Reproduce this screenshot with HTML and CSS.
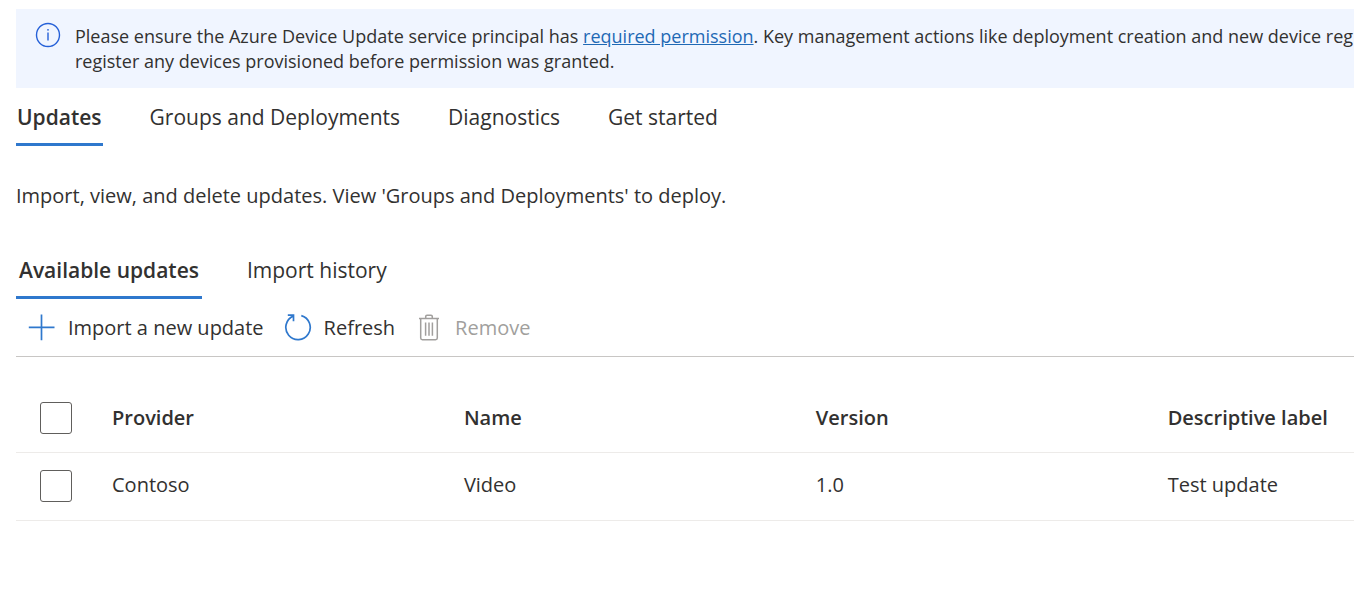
FILE: index.html
```
<!DOCTYPE html>
<html lang="en">
<head>
    <meta charset="UTF-8">
    <meta name="viewport" content="width=device-width, initial-scale=1.0">
    <title>Device Update</title>
    <link rel="stylesheet" href="styles.css">
</head>
<body>
    <div class="banner">
        <svg class="info-icon" width="26" height="26" viewBox="0 0 26 26" fill="none" stroke="#2560d8" aria-hidden="true">
            <circle cx="13" cy="13" r="11.5" stroke-width="1.4"/>
            <path d="M13 10.5V18.5" stroke-width="1.4"/>
            <circle cx="13" cy="7.8" r="0.9" fill="#2560d8" stroke="none"/>
        </svg>
        <p class="banner-text">Please ensure the Azure Device Update service principal has <a href="#">required permission</a>. Key management actions like deployment creation and new device reg<br>register any devices provisioned before permission was granted.</p>
    </div>

    <nav class="tabs main-tabs">
        <a class="tab active" href="#">Updates</a>
        <a class="tab" href="#">Groups and Deployments</a>
        <a class="tab" href="#">Diagnostics</a>
        <a class="tab" href="#">Get started</a>
    </nav>

    <main>
        <p class="intro">Import, view, and delete updates. View 'Groups and Deployments' to deploy.</p>

        <nav class="tabs sub-tabs">
            <a class="tab active" href="#">Available updates</a>
            <a class="tab" href="#">Import history</a>
        </nav>

        <div class="toolbar">
            <button type="button" class="command">
                <svg width="28" height="28" viewBox="0 0 28 28" fill="none" stroke="#2f78cd" stroke-width="1.7" aria-hidden="true">
                    <path d="M0.8 13.3H26.5M13.5 0.5V26.2"/>
                </svg>
                Import a new update
            </button>
            <button type="button" class="command">
                <svg width="28" height="28" viewBox="0 0 28 28" fill="none" stroke="#2f78cd" stroke-width="1.7" aria-hidden="true">
                    <path d="M17.3 1.6A12.2 12.2 0 1 1 9.3 2.1"/>
                    <path d="M3.8 1.2H9.5V7.3"/>
                </svg>
                Refresh
            </button>
            <button type="button" class="command" disabled>
                <svg width="28" height="28" viewBox="0 0 28 28" fill="none" stroke="#a19f9d" stroke-width="1.5" aria-hidden="true">
                    <path d="M4 4.5H24"/>
                    <path d="M10.7 4.5V2.5Q10.7 1.3 12 1.3H16Q17.3 1.3 17.3 2.5V4.5"/>
                    <path d="M5.7 4.5V24Q5.7 25.7 7.4 25.7H20.6Q22.3 25.7 22.3 24V4.5"/>
                    <path d="M10.6 8.5V21.8M14 8.5V21.8M17.4 8.5V21.8"/>
                </svg>
                Remove
            </button>
        </div>

        <table class="updates">
            <thead>
                <tr>
                    <th class="check"><input type="checkbox" aria-label="Select all updates"></th>
                    <th>Provider</th>
                    <th>Name</th>
                    <th>Version</th>
                    <th class="last">Descriptive label</th>
                </tr>
            </thead>
            <tbody>
                <tr>
                    <td class="check"><input type="checkbox" aria-label="Select Contoso Video 1.0"></td>
                    <td>Contoso</td>
                    <td>Video</td>
                    <td>1.0</td>
                    <td class="last">Test update</td>
                </tr>
            </tbody>
        </table>
    </main>
</body>
</html>
```
FILE: styles.css
```
body {
    font-family: "Segoe UI", "Open Sans", sans-serif;
    font-size: 20px;
    line-height: 28px;
    margin: 0;
    padding: 9px 0 0 16px;
    background-color: #fff;
    color: #323130;
    overflow-x: hidden;
}

p {
    margin: 0;
}

.banner {
    display: flex;
    gap: 14px;
    padding: 13px 0 14px 19px;
    background-color: #f0f5ff;
    overflow: hidden;
}

.info-icon {
    flex: none;
}

.banner-text {
    padding-top: 2px;
    font-size: 18px;
    line-height: 25px;
    white-space: nowrap;
}

.banner-text a {
    color: #1f69b5;
}

.tabs {
    display: flex;
    gap: 46px;
    font-size: 21px;
}

.tab {
    padding: 0 1px 12px;
    border-bottom: 3px solid transparent;
    color: #323130;
    text-decoration: none;
}

.tab.active {
    border-color: #2f78cd;
    font-weight: 600;
}

.main-tabs {
    padding-top: 15px;
}

.intro {
    padding: 36px 0;
}

.sub-tabs {
    gap: 42px;
    padding-top: 10px;
}

.sub-tabs .tab {
    padding: 0 3px 12px;
}

.toolbar {
    display: flex;
    gap: 20px;
    padding: 15px 12px 14px;
    border-bottom: 1px solid #c8c6c4;
}

.command {
    display: flex;
    align-items: center;
    gap: 12px;
    padding: 0;
    border: none;
    background: none;
    color: #323130;
    font: inherit;
    cursor: pointer;
}

.command:disabled {
    color: #a19f9d;
    cursor: default;
}

.updates {
    width: 100%;
    margin-top: 27px;
    border-collapse: collapse;
    table-layout: fixed;
}

.updates th,
.updates td {
    box-sizing: border-box;
    width: 26.3%;
    height: 68px;
    padding: 0 0 2px;
    border-bottom: 1px solid #edebe9;
    text-align: left;
    white-space: nowrap;
}

.updates th {
    padding: 0;
    font-weight: 600;
}

.updates .check {
    width: 96px;
    padding: 0;
}

.updates .last {
    width: auto;
}

.check input {
    display: block;
    width: 32px;
    height: 32px;
    margin: 0 0 0 24px;
    border: 1px solid #605e5c;
    border-radius: 3px;
    background-color: #fff;
    appearance: none;
}

.check input:checked {
    background-color: #2f78cd;
}
```
